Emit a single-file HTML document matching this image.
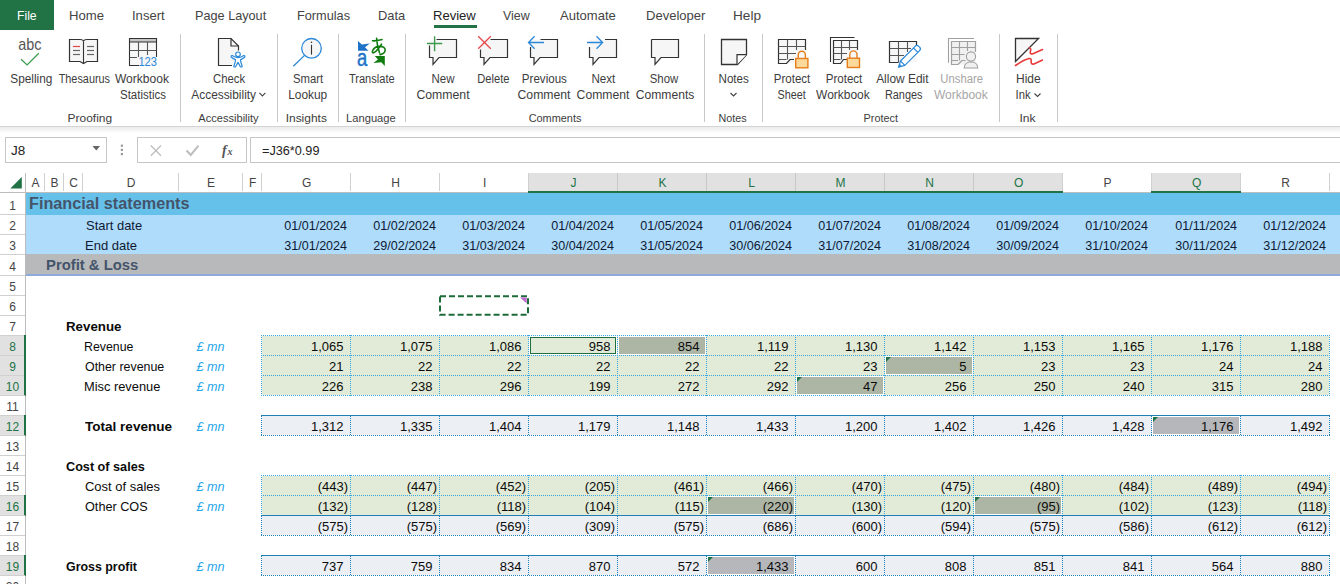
<!DOCTYPE html><html><head><meta charset="utf-8"><style>
html,body{margin:0;padding:0;}
body{width:1340px;height:584px;overflow:hidden;position:relative;background:#fff;font-family:"Liberation Sans", sans-serif;}
.t{position:absolute;white-space:nowrap;}
.r{position:absolute;box-sizing:border-box;}
.sc{display:inline-block;}
svg{position:absolute;left:0;top:0;}
</style></head><body>
<div class="r" style="left:0px;top:0px;width:54px;height:30px;background:#217346;"></div>
<div class="t" style="left:16.56px;top:9.00px;font-size:13px;line-height:13px;color:#fff;font-weight:normal;font-style:normal;text-align:left;"><span class="sc" style="transform:scaleX(0.9383);transform-origin:left center">File</span></div>
<div class="t" style="left:68.59px;top:9.00px;font-size:13px;line-height:13px;color:#444;font-weight:normal;font-style:normal;text-align:left;"><span class="sc" style="transform:scaleX(1.0105);transform-origin:left center">Home</span></div>
<div class="t" style="left:132.00px;top:9.00px;font-size:13px;line-height:13px;color:#444;font-weight:normal;font-style:normal;text-align:left;"><span class="sc" style="transform:scaleX(1.0031);transform-origin:left center">Insert</span></div>
<div class="t" style="left:195.42px;top:9.00px;font-size:13px;line-height:13px;color:#444;font-weight:normal;font-style:normal;text-align:left;"><span class="sc" style="transform:scaleX(0.9752);transform-origin:left center">Page Layout</span></div>
<div class="t" style="left:296.52px;top:9.00px;font-size:13px;line-height:13px;color:#444;font-weight:normal;font-style:normal;text-align:left;"><span class="sc" style="transform:scaleX(0.9781);transform-origin:left center">Formulas</span></div>
<div class="t" style="left:378.01px;top:9.00px;font-size:13px;line-height:13px;color:#444;font-weight:normal;font-style:normal;text-align:left;"><span class="sc" style="transform:scaleX(0.9916);transform-origin:left center">Data</span></div>
<div class="t" style="left:433.00px;top:9.00px;font-size:13px;line-height:13px;color:#222;font-weight:normal;font-style:normal;text-align:left;"><span class="sc" style="transform:scaleX(1.0039);transform-origin:left center">Review</span></div>
<div class="t" style="left:502.70px;top:9.00px;font-size:13px;line-height:13px;color:#444;font-weight:normal;font-style:normal;text-align:left;"><span class="sc" style="transform:scaleX(0.9561);transform-origin:left center">View</span></div>
<div class="t" style="left:560.00px;top:9.00px;font-size:13px;line-height:13px;color:#444;font-weight:normal;font-style:normal;text-align:left;"><span class="sc" style="transform:scaleX(1.0034);transform-origin:left center">Automate</span></div>
<div class="t" style="left:645.50px;top:9.00px;font-size:13px;line-height:13px;color:#444;font-weight:normal;font-style:normal;text-align:left;"><span class="sc" style="transform:scaleX(1.0029);transform-origin:left center">Developer</span></div>
<div class="t" style="left:732.95px;top:9.00px;font-size:13px;line-height:13px;color:#444;font-weight:normal;font-style:normal;text-align:left;"><span class="sc" style="transform:scaleX(1.0468);transform-origin:left center">Help</span></div>
<div class="r" style="left:434px;top:25px;width:43px;height:3px;background:#217346;"></div>
<div class="t" style="left:-268.97px;width:600px;top:72.84px;font-size:12px;line-height:12px;color:#3c3c3c;font-weight:normal;font-style:normal;text-align:center;"><span class="sc" style="transform:scaleX(0.9852);transform-origin:center center">Spelling</span></div>
<div class="t" style="left:-216.10px;width:600px;top:72.84px;font-size:12px;line-height:12px;color:#3c3c3c;font-weight:normal;font-style:normal;text-align:center;"><span class="sc" style="transform:scaleX(0.9066);transform-origin:center center">Thesaurus</span></div>
<div class="t" style="left:-158.00px;width:600px;top:72.84px;font-size:12px;line-height:12px;color:#3c3c3c;font-weight:normal;font-style:normal;text-align:center;"><span class="sc" style="transform:scaleX(1.0036);transform-origin:center center">Workbook</span></div>
<div class="t" style="left:-157.00px;width:600px;top:88.84px;font-size:12px;line-height:12px;color:#3c3c3c;font-weight:normal;font-style:normal;text-align:center;"><span class="sc" style="transform:scaleX(0.9581);transform-origin:center center">Statistics</span></div>
<div class="t" style="left:-210.38px;width:600px;top:112.52px;font-size:11.2px;line-height:11.2px;color:#3c3c3c;font-weight:normal;font-style:normal;text-align:center;"><span class="sc" style="transform:scaleX(1.0688);transform-origin:center center">Proofing</span></div>
<div class="t" style="left:-70.97px;width:600px;top:72.84px;font-size:12px;line-height:12px;color:#3c3c3c;font-weight:normal;font-style:normal;text-align:center;"><span class="sc" style="transform:scaleX(0.9425);transform-origin:center center">Check</span></div>
<div class="t" style="left:-76.60px;width:600px;top:88.84px;font-size:12px;line-height:12px;color:#3c3c3c;font-weight:normal;font-style:normal;text-align:center;"><span class="sc" style="transform:scaleX(0.9901);transform-origin:center center">Accessibility</span></div>
<div class="t" style="left:-71.80px;width:600px;top:112.52px;font-size:11.2px;line-height:11.2px;color:#3c3c3c;font-weight:normal;font-style:normal;text-align:center;"><span class="sc" style="transform:scaleX(0.9913);transform-origin:center center">Accessibility</span></div>
<div class="t" style="left:7.99px;width:600px;top:72.84px;font-size:12px;line-height:12px;color:#3c3c3c;font-weight:normal;font-style:normal;text-align:center;"><span class="sc" style="transform:scaleX(0.9428);transform-origin:center center">Smart</span></div>
<div class="t" style="left:8.14px;width:600px;top:88.84px;font-size:12px;line-height:12px;color:#3c3c3c;font-weight:normal;font-style:normal;text-align:center;"><span class="sc" style="transform:scaleX(0.9926);transform-origin:center center">Lookup</span></div>
<div class="t" style="left:6.55px;width:600px;top:112.52px;font-size:11.2px;line-height:11.2px;color:#3c3c3c;font-weight:normal;font-style:normal;text-align:center;"><span class="sc" style="transform:scaleX(1.0695);transform-origin:center center">Insights</span></div>
<div class="t" style="left:71.85px;width:600px;top:72.84px;font-size:12px;line-height:12px;color:#3c3c3c;font-weight:normal;font-style:normal;text-align:center;"><span class="sc" style="transform:scaleX(0.9218);transform-origin:center center">Translate</span></div>
<div class="t" style="left:71.31px;width:600px;top:112.52px;font-size:11.2px;line-height:11.2px;color:#3c3c3c;font-weight:normal;font-style:normal;text-align:center;"><span class="sc" style="transform:scaleX(0.9989);transform-origin:center center">Language</span></div>
<div class="t" style="left:143.24px;width:600px;top:72.84px;font-size:12px;line-height:12px;color:#3c3c3c;font-weight:normal;font-style:normal;text-align:center;"><span class="sc" style="transform:scaleX(0.9573);transform-origin:center center">New</span></div>
<div class="t" style="left:142.96px;width:600px;top:88.84px;font-size:12px;line-height:12px;color:#3c3c3c;font-weight:normal;font-style:normal;text-align:center;"><span class="sc" style="transform:scaleX(1.0213);transform-origin:center center">Comment</span></div>
<div class="t" style="left:193.55px;width:600px;top:72.84px;font-size:12px;line-height:12px;color:#3c3c3c;font-weight:normal;font-style:normal;text-align:center;"><span class="sc" style="transform:scaleX(0.9311);transform-origin:center center">Delete</span></div>
<div class="t" style="left:244.50px;width:600px;top:72.84px;font-size:12px;line-height:12px;color:#3c3c3c;font-weight:normal;font-style:normal;text-align:center;"><span class="sc" style="transform:scaleX(0.9639);transform-origin:center center">Previous</span></div>
<div class="t" style="left:243.56px;width:600px;top:88.84px;font-size:12px;line-height:12px;color:#3c3c3c;font-weight:normal;font-style:normal;text-align:center;"><span class="sc" style="transform:scaleX(1.0194);transform-origin:center center">Comment</span></div>
<div class="t" style="left:302.98px;width:600px;top:72.84px;font-size:12px;line-height:12px;color:#3c3c3c;font-weight:normal;font-style:normal;text-align:center;"><span class="sc" style="transform:scaleX(0.9669);transform-origin:center center">Next</span></div>
<div class="t" style="left:302.96px;width:600px;top:88.84px;font-size:12px;line-height:12px;color:#3c3c3c;font-weight:normal;font-style:normal;text-align:center;"><span class="sc" style="transform:scaleX(1.0156);transform-origin:center center">Comment</span></div>
<div class="t" style="left:364.24px;width:600px;top:72.84px;font-size:12px;line-height:12px;color:#3c3c3c;font-weight:normal;font-style:normal;text-align:center;"><span class="sc" style="transform:scaleX(0.9489);transform-origin:center center">Show</span></div>
<div class="t" style="left:364.70px;width:600px;top:88.84px;font-size:12px;line-height:12px;color:#3c3c3c;font-weight:normal;font-style:normal;text-align:center;"><span class="sc" style="transform:scaleX(1.0118);transform-origin:center center">Comments</span></div>
<div class="t" style="left:255.00px;width:600px;top:112.52px;font-size:11.2px;line-height:11.2px;color:#3c3c3c;font-weight:normal;font-style:normal;text-align:center;"><span class="sc" style="transform:scaleX(0.9763);transform-origin:center center">Comments</span></div>
<div class="t" style="left:433.80px;width:600px;top:72.84px;font-size:12px;line-height:12px;color:#3c3c3c;font-weight:normal;font-style:normal;text-align:center;"><span class="sc" style="transform:scaleX(0.9698);transform-origin:center center">Notes</span></div>
<div class="t" style="left:432.61px;width:600px;top:112.52px;font-size:11.2px;line-height:11.2px;color:#3c3c3c;font-weight:normal;font-style:normal;text-align:center;"><span class="sc" style="transform:scaleX(0.9584);transform-origin:center center">Notes</span></div>
<div class="t" style="left:491.68px;width:600px;top:72.84px;font-size:12px;line-height:12px;color:#3c3c3c;font-weight:normal;font-style:normal;text-align:center;"><span class="sc" style="transform:scaleX(0.9591);transform-origin:center center">Protect</span></div>
<div class="t" style="left:492.10px;width:600px;top:88.84px;font-size:12px;line-height:12px;color:#3c3c3c;font-weight:normal;font-style:normal;text-align:center;"><span class="sc" style="transform:scaleX(0.8993);transform-origin:center center">Sheet</span></div>
<div class="t" style="left:543.98px;width:600px;top:72.84px;font-size:12px;line-height:12px;color:#3c3c3c;font-weight:normal;font-style:normal;text-align:center;"><span class="sc" style="transform:scaleX(0.9643);transform-origin:center center">Protect</span></div>
<div class="t" style="left:542.90px;width:600px;top:88.84px;font-size:12px;line-height:12px;color:#3c3c3c;font-weight:normal;font-style:normal;text-align:center;"><span class="sc" style="transform:scaleX(0.9982);transform-origin:center center">Workbook</span></div>
<div class="t" style="left:602.17px;width:600px;top:72.84px;font-size:12px;line-height:12px;color:#3c3c3c;font-weight:normal;font-style:normal;text-align:center;"><span class="sc" style="transform:scaleX(0.9934);transform-origin:center center">Allow Edit</span></div>
<div class="t" style="left:603.20px;width:600px;top:88.84px;font-size:12px;line-height:12px;color:#3c3c3c;font-weight:normal;font-style:normal;text-align:center;"><span class="sc" style="transform:scaleX(0.9091);transform-origin:center center">Ranges</span></div>
<div class="t" style="left:661.35px;width:600px;top:72.84px;font-size:12px;line-height:12px;color:#a6a6a6;font-weight:normal;font-style:normal;text-align:center;"><span class="sc" style="transform:scaleX(0.9413);transform-origin:center center">Unshare</span></div>
<div class="t" style="left:660.90px;width:600px;top:88.84px;font-size:12px;line-height:12px;color:#a6a6a6;font-weight:normal;font-style:normal;text-align:center;"><span class="sc" style="transform:scaleX(1.0000);transform-origin:center center">Workbook</span></div>
<div class="t" style="left:580.67px;width:600px;top:112.52px;font-size:11.2px;line-height:11.2px;color:#3c3c3c;font-weight:normal;font-style:normal;text-align:center;"><span class="sc" style="transform:scaleX(0.9688);transform-origin:center center">Protect</span></div>
<div class="t" style="left:728.34px;width:600px;top:72.84px;font-size:12px;line-height:12px;color:#3c3c3c;font-weight:normal;font-style:normal;text-align:center;"><span class="sc" style="transform:scaleX(0.9998);transform-origin:center center">Hide</span></div>
<div class="t" style="left:722.56px;width:600px;top:88.84px;font-size:12px;line-height:12px;color:#3c3c3c;font-weight:normal;font-style:normal;text-align:center;"><span class="sc" style="transform:scaleX(0.9370);transform-origin:center center">Ink</span></div>
<div class="t" style="left:727.54px;width:600px;top:112.52px;font-size:11.2px;line-height:11.2px;color:#3c3c3c;font-weight:normal;font-style:normal;text-align:center;"><span class="sc" style="transform:scaleX(1.0747);transform-origin:center center">Ink</span></div>
<svg width="1340" height="130" viewBox="0 0 1340 130"><line x1="180.5" y1="34" x2="180.5" y2="122" stroke="#c8c8c8" stroke-width="1"/><line x1="277.5" y1="34" x2="277.5" y2="122" stroke="#c8c8c8" stroke-width="1"/><line x1="338.5" y1="34" x2="338.5" y2="122" stroke="#c8c8c8" stroke-width="1"/><line x1="405.5" y1="34" x2="405.5" y2="122" stroke="#c8c8c8" stroke-width="1"/><line x1="704.5" y1="34" x2="704.5" y2="122" stroke="#c8c8c8" stroke-width="1"/><line x1="762.5" y1="34" x2="762.5" y2="122" stroke="#c8c8c8" stroke-width="1"/><line x1="999.5" y1="34" x2="999.5" y2="122" stroke="#c8c8c8" stroke-width="1"/><line x1="1057.5" y1="34" x2="1057.5" y2="122" stroke="#c8c8c8" stroke-width="1"/><path d="M259.4,92.9 L262.4,95.9 L265.4,92.9" fill="none" stroke="#444" stroke-width="1.1"/><path d="M730.5,93.0 L733.5,96.0 L736.5,93.0" fill="none" stroke="#444" stroke-width="1.1"/><path d="M1034.5,93.5 L1037.5,96.5 L1040.5,93.5" fill="none" stroke="#444" stroke-width="1.1"/><text x="18.3" y="50" font-size="16" fill="#555" font-family="Liberation Sans" transform="translate(18.3,0) scale(0.9,1) translate(-18.3,0)">abc</text><path d="M21,59.2 L27.1,64.9 L38.8,53.3" fill="none" stroke="#3c9a4e" stroke-width="1.3"/><path d="M69.5,39.5 L80,39.5 Q83.5,39.5 83.5,41.5 Q83.5,39.5 87,39.5 L97.5,39.5 L97.5,61.5 L87,61.5 L83.5,63.5 L80,61.5 L69.5,61.5 Z" fill="#f6f6f6" stroke="#333" stroke-width="1.2"/><line x1="83.5" y1="41.5" x2="83.5" y2="63" stroke="#333" stroke-width="1.1"/><line x1="73" y1="46.5" x2="80" y2="46.5" stroke="#e8474a" stroke-width="1.2"/><line x1="73" y1="50.5" x2="80" y2="50.5" stroke="#666" stroke-width="1.2"/><line x1="73" y1="54.5" x2="80" y2="54.5" stroke="#666" stroke-width="1.2"/><line x1="87" y1="46.5" x2="94" y2="46.5" stroke="#666" stroke-width="1.2"/><line x1="87" y1="50.5" x2="94" y2="50.5" stroke="#666" stroke-width="1.2"/><line x1="87" y1="54.5" x2="94" y2="54.5" stroke="#666" stroke-width="1.2"/><rect x="129.5" y="38.5" width="27" height="27" fill="#f7f7f7" stroke="none"/><rect x="129.5" y="38.5" width="27" height="3.5" fill="#c6c6c6" stroke="#333" stroke-width="1"/><path d="M156.5,57 L156.5,38.5 L129.5,38.5 L129.5,65.5 L139,65.5" fill="none" stroke="#333" stroke-width="1.1"/><path d="M129.5,50.5 L156.5,50.5 M129.5,57.5 L137,57.5 M138.5,42 L138.5,57 M147.5,42 L147.5,55" fill="none" stroke="#555" stroke-width="1.1"/><text x="138.4" y="66" font-size="13" fill="#2b88d8" font-family="Liberation Sans" transform="translate(138.4,0) scale(0.86,1) translate(-138.4,0)">123</text><path d="M218.5,38.5 L231,38.5 L238.5,46 L238.5,52 L232,65.5 L218.5,65.5 Z" fill="#f6f6f6" stroke="none"/><path d="M238.5,50.5 L238.5,46 L231,38.5 L218.5,38.5 L218.5,65.5 L232,65.5" fill="none" stroke="#333" stroke-width="1.2"/><path d="M231,38.5 L231,46 L238.5,46" fill="none" stroke="#333" stroke-width="1.2"/><circle cx="238" cy="54.3" r="2.3" fill="#fff" stroke="#2b88d8" stroke-width="1.2"/><path d="M232.2,55.6 Q235,57.6 238,57.6 Q241,57.6 243.8,55.6 Q245.2,55.2 244.8,57 Q242.6,59 240.6,59.6 L240.8,62 L242.2,66.2 Q241.8,67.4 240.4,66.8 L238,62.4 L235.6,66.8 Q234.2,67.4 233.8,66.2 L235.2,62 L235.4,59.6 Q233.4,59 231.2,57 Q230.8,55.2 232.2,55.6 Z" fill="#fff" stroke="#2b88d8" stroke-width="1.2" stroke-linejoin="round"/><circle cx="311.5" cy="48.3" r="9.8" fill="#f6f6f6" stroke="#2b88d8" stroke-width="1.3"/><line x1="293.3" y1="66.3" x2="304.5" y2="55.4" stroke="#2b88d8" stroke-width="1.3"/><circle cx="311.5" cy="42.3" r="0.8" fill="#333"/><line x1="311.5" y1="44.8" x2="311.5" y2="54.6" stroke="#333" stroke-width="1.1"/><path d="M358,41 L361.8,44.6 L369.8,43.6 L365,47.2 L368.4,50.8 L358,50.8 Z" fill="#1e73c8"/><text x="357" y="66" font-size="23" fill="#1e73c8" stroke="#1e73c8" stroke-width="0.5" font-family="Liberation Sans" transform="translate(357,0) scale(0.8,1) translate(-357,0)">a</text><path d="M372.5,40.8 Q377,41 382,39.6 M376.6,38.3 Q377,46 379.5,52.8 M381.5,44.2 Q377.5,50.5 374,52.6 Q371.8,53.6 372.6,50.6 Q374.5,46.6 379.5,46.4 Q385.3,46.3 385.2,50.2 Q385,53.6 380,54.6" fill="none" stroke="#107c10" stroke-width="1.6" stroke-linecap="round"/><path d="M384.8,65.9 L381.3,62.3 L373.4,63.1 L377.9,59.6 L374.8,55.9 L384.8,55.9 Z" fill="#107c10"/><path d="M429.5,39.5 L456.5,39.5 L456.5,57.5 L439,57.5 L433,64.3 L433,57.5 L429.5,57.5 Z" fill="#f6f6f6"/><path d="M436.5,39.5 L456.5,39.5 L456.5,57.5 L439,57.5 L433,64.3 L433,57.5 L429.5,57.5 L429.5,45.5" fill="none" stroke="#333" stroke-width="1.2" stroke-linejoin="miter"/><path d="M427,43.5 L442.2,43.5 M434.6,36.3 L434.6,51.3" stroke="#3c9a4e" stroke-width="1.4"/><path d="M480.5,39.5 L507.5,39.5 L507.5,57.5 L490,57.5 L484,64.3 L484,57.5 L480.5,57.5 Z" fill="#f6f6f6"/><path d="M490.5,39.5 L507.5,39.5 L507.5,57.5 L490,57.5 L484,64.3 L484,57.5 L480.5,57.5 L480.5,49.5" fill="none" stroke="#333" stroke-width="1.2" stroke-linejoin="miter"/><path d="M478.2,36.2 L490.8,48.7 M490.8,36.2 L478.2,48.7" stroke="#e8474a" stroke-width="1.3"/><path d="M530.5,39.5 L557.5,39.5 L557.5,57.5 L540,57.5 L534,64.3 L534,57.5 L530.5,57.5 Z" fill="#f6f6f6"/><path d="M540.5,39.5 L557.5,39.5 L557.5,57.5 L540,57.5 L534,64.3 L534,57.5 L530.5,57.5 L530.5,47" fill="none" stroke="#333" stroke-width="1.2" stroke-linejoin="miter"/><path d="M528.5,42.5 L544,42.5 M534.6,36.3 L528.5,42.5 L534.6,48.7" fill="none" stroke="#2b88d8" stroke-width="1.3"/><path d="M589.5,39.5 L616.5,39.5 L616.5,57.5 L599,57.5 L593,64.3 L593,57.5 L589.5,57.5 Z" fill="#f6f6f6"/><path d="M605,39.5 L616.5,39.5 L616.5,57.5 L599,57.5 L593,64.3 L593,57.5 L589.5,57.5 L589.5,47" fill="none" stroke="#333" stroke-width="1.2" stroke-linejoin="miter"/><path d="M587,42.5 L602.6,42.5 M596.5,36.3 L602.6,42.5 L596.5,48.7" fill="none" stroke="#2b88d8" stroke-width="1.3"/><path d="M651.5,39.5 L678.5,39.5 L678.5,57.5 L661,57.5 L655,64.3 L655,57.5 L651.5,57.5 Z" fill="#f6f6f6"/><path d="M651.5,39.5 L678.5,39.5 L678.5,57.5 L661,57.5 L655,64.3 L655,57.5 L651.5,57.5 L651.5,39.5" fill="none" stroke="#333" stroke-width="1.2" stroke-linejoin="miter"/><path d="M721.5,39.5 L746.5,39.5 L746.5,54.7 L737.5,64.5 L721.5,64.5 Z" fill="#f6f6f6" stroke="#333" stroke-width="1.3" stroke-linejoin="miter"/><path d="M746.5,54.7 L737,54.7 L737,64.5" fill="#fff" stroke="#333" stroke-width="1.2"/><rect x="778.5" y="39.5" width="27" height="24" fill="#f7f7f7"/><path d="M805.5,50 L805.5,39.5 L778.5,39.5 L778.5,63.5 L786.5,63.5 L790,59.5 L794,59.5" fill="none" stroke="#333" stroke-width="1.2"/><path d="M778.5,46.5 L805.5,46.5 M778.5,53.5 L796,53.5 M778.5,59.5 L786.5,59.5 M787.5,39.5 L787.5,59.5 M796.5,39.5 L796.5,50" fill="none" stroke="#555" stroke-width="1.1"/><path d="M798.2,58.5 L798.2,55.0 A3.6,3.8 0 0 1 805.4000000000001,55.0 L805.4000000000001,58.5" fill="none" stroke="#e67e1c" stroke-width="1.4"/><rect x="795.7" y="58.5" width="12.2" height="9.3" fill="#fad99b" stroke="#e67e1c" stroke-width="1.4"/><path d="M830.5,62 L830.5,37.5 L854.5,37.5" fill="none" stroke="#333" stroke-width="1.1"/><rect x="833.5" y="40.5" width="24.5" height="23" fill="#f7f7f7"/><path d="M857.5,50 L857.5,40.5 L833.5,40.5 L833.5,63.5 L840.5,63.5 L843.5,59.5 L847,59.5" fill="none" stroke="#333" stroke-width="1.2"/><path d="M833.5,47.5 L857.5,47.5 M833.5,53.5 L847,53.5 M833.5,59.5 L840.5,59.5 M841.5,40.5 L841.5,59.5 M849.5,40.5 L849.5,50" fill="none" stroke="#555" stroke-width="1.1"/><path d="M849.8,58.2 L849.8,54.7 A3.6,3.8 0 0 1 857.0,54.7 L857.0,58.2" fill="none" stroke="#e67e1c" stroke-width="1.4"/><rect x="847.3" y="58.2" width="12.2" height="9.3" fill="#fad99b" stroke="#e67e1c" stroke-width="1.4"/><rect x="889.5" y="41.5" width="27" height="21" fill="#f7f7f7"/><path d="M916.5,45 L916.5,41.5 L889.5,41.5 L889.5,62.5 L898.5,62.5" fill="none" stroke="#333" stroke-width="1.2"/><path d="M889.5,48.5 L911,48.5 M889.5,55.5 L904,55.5 M898.5,41.5 L898.5,62.5 M907.5,41.5 L907.5,52" fill="none" stroke="#555" stroke-width="1.1"/><path d="M898.5,67.3 L900.5,61 L915.2,46.3 Q917,44.6 918.7,46.3 L919.6,47.2 Q921.3,49 919.6,50.7 L904.8,65.4 Z" fill="#fff" stroke="#2b88d8" stroke-width="1.2" stroke-linejoin="round"/><path d="M900.5,61 L904.8,65.4 M913.5,48 L917.9,52.4" fill="none" stroke="#2b88d8" stroke-width="1.1"/><path d="M898.5,67.3 L899.6,63.8 L902,66.2 Z" fill="#2b88d8"/><path d="M948.5,62.7 L948.5,38.5 L974,38.5" fill="none" stroke="#a0a0a0" stroke-width="1.1"/><rect x="951.5" y="41.5" width="24" height="23" fill="#f0f0f0"/><path d="M975.5,52 L975.5,41.5 L951.5,41.5 L951.5,64.5 L958,64.5 L962,60.5 L965.5,60.5" fill="none" stroke="#a0a0a0" stroke-width="1.2"/><path d="M951.5,47.5 L975.5,47.5 M951.5,54.5 L964.5,54.5 M951.5,60.5 L958,60.5 M959.5,41.5 L959.5,60.5 M967.5,41.5 L967.5,51" fill="none" stroke="#a0a0a0" stroke-width="1.1"/><circle cx="971" cy="56.5" r="4.6" fill="#f0f0f0" stroke="#a0a0a0" stroke-width="1.1"/><path d="M964.2,68 Q964.5,62 971,62 Q977.5,62 977.8,68 Z" fill="#f0f0f0" stroke="#a0a0a0" stroke-width="1.1"/><path d="M1015.5,38.5 L1038.6,38.5 L1015.5,61.5 Z" fill="#f6f6f6" stroke="#333" stroke-width="1.3" stroke-linejoin="miter"/><path d="M1029.3,47.9 Q1031.5,48.5 1030.5,51 Q1029.2,54.5 1033,53.7 L1042.5,49.5" fill="none" stroke="#e83a3a" stroke-width="1.6" stroke-linecap="round"/><path d="M1015.5,65.5 Q1023,60 1029,58.5 Q1031.5,58.3 1031.2,61 Q1030.7,64.8 1034,64 L1042.5,60" fill="none" stroke="#e83a3a" stroke-width="1.6" stroke-linecap="round"/></svg>
<div class="r" style="left:0px;top:126px;width:1340px;height:1px;background:#d4d4d4;"></div>
<div class="r" style="left:0px;top:127px;width:1340px;height:6px;background:linear-gradient(#ececec,#fdfdfd);"></div>
<div class="r" style="left:5px;top:137px;width:102px;height:26px;background:#fff;border:1px solid #c6c6c6;"></div>
<div class="t" style="left:11.00px;top:144.20px;font-size:13px;line-height:13px;color:#222;font-weight:normal;font-style:normal;text-align:left;"><span class="sc" style="transform:scaleX(1.0370);transform-origin:left center">J8</span></div>
<svg width="1340" height="170" viewBox="0 0 1340 170" style="pointer-events:none"><path d="M92.5,146 L100,146 L96.3,150.5 Z" fill="#666"/><rect x="120.8" y="144.6" width="2.2" height="2.2" fill="#999"/><rect x="120.8" y="148.8" width="2.2" height="2.2" fill="#999"/><rect x="120.8" y="153" width="2.2" height="2.2" fill="#999"/></svg>
<div class="r" style="left:137px;top:137px;width:110px;height:26px;background:#fff;border:1px solid #c6c6c6;"></div>
<div class="r" style="left:250px;top:137px;width:1100px;height:26px;background:#fff;border:1px solid #c6c6c6;"></div>
<svg width="1340" height="170" viewBox="0 0 1340 170" style="pointer-events:none"><path d="M150.8,145.5 L161,155.7 M161,145.5 L150.8,155.7" stroke="#bdbdbd" stroke-width="1.3"/><path d="M186.5,150.5 L190.8,155 L198.5,145.7" fill="none" stroke="#bdbdbd" stroke-width="2"/><text x="222" y="155" font-size="14" font-style="italic" font-weight="bold" fill="#555" font-family="Liberation Serif">f</text><text x="227.5" y="155" font-size="10" font-style="italic" font-weight="bold" fill="#555" font-family="Liberation Serif">x</text></svg>
<div class="t" style="left:262.40px;top:144.20px;font-size:13px;line-height:13px;color:#222;font-weight:normal;font-style:normal;text-align:left;"><span class="sc" style="transform:scaleX(0.9747);transform-origin:left center">=J36*0.99</span></div>
<div class="t" style="left:-264.40px;width:600px;top:176.84px;font-size:12px;line-height:12px;color:#444;font-weight:normal;font-style:normal;text-align:center;">A</div>
<div class="t" style="left:-245.40px;width:600px;top:176.84px;font-size:12px;line-height:12px;color:#444;font-weight:normal;font-style:normal;text-align:center;">B</div>
<div class="t" style="left:-226.40px;width:600px;top:176.84px;font-size:12px;line-height:12px;color:#444;font-weight:normal;font-style:normal;text-align:center;">C</div>
<div class="t" style="left:-168.90px;width:600px;top:176.84px;font-size:12px;line-height:12px;color:#444;font-weight:normal;font-style:normal;text-align:center;">D</div>
<div class="t" style="left:-88.90px;width:600px;top:176.84px;font-size:12px;line-height:12px;color:#444;font-weight:normal;font-style:normal;text-align:center;">E</div>
<div class="t" style="left:-47.40px;width:600px;top:176.84px;font-size:12px;line-height:12px;color:#444;font-weight:normal;font-style:normal;text-align:center;">F</div>
<div class="t" style="left:6.60px;width:600px;top:176.84px;font-size:12px;line-height:12px;color:#444;font-weight:normal;font-style:normal;text-align:center;">G</div>
<div class="t" style="left:95.60px;width:600px;top:176.84px;font-size:12px;line-height:12px;color:#444;font-weight:normal;font-style:normal;text-align:center;">H</div>
<div class="t" style="left:184.60px;width:600px;top:176.84px;font-size:12px;line-height:12px;color:#444;font-weight:normal;font-style:normal;text-align:center;">I</div>
<div class="r" style="left:528px;top:173px;width:89px;height:18px;background:#e1e1e1;"></div>
<div class="r" style="left:528px;top:191px;width:89px;height:2px;background:#217346;"></div>
<div class="t" style="left:273.60px;width:600px;top:176.84px;font-size:12px;line-height:12px;color:#217346;font-weight:normal;font-style:normal;text-align:center;">J</div>
<div class="r" style="left:617px;top:173px;width:89px;height:18px;background:#e1e1e1;"></div>
<div class="r" style="left:617px;top:191px;width:89px;height:2px;background:#217346;"></div>
<div class="t" style="left:362.60px;width:600px;top:176.84px;font-size:12px;line-height:12px;color:#217346;font-weight:normal;font-style:normal;text-align:center;">K</div>
<div class="r" style="left:706px;top:173px;width:89px;height:18px;background:#e1e1e1;"></div>
<div class="r" style="left:706px;top:191px;width:89px;height:2px;background:#217346;"></div>
<div class="t" style="left:451.60px;width:600px;top:176.84px;font-size:12px;line-height:12px;color:#217346;font-weight:normal;font-style:normal;text-align:center;">L</div>
<div class="r" style="left:795px;top:173px;width:89px;height:18px;background:#e1e1e1;"></div>
<div class="r" style="left:795px;top:191px;width:89px;height:2px;background:#217346;"></div>
<div class="t" style="left:540.60px;width:600px;top:176.84px;font-size:12px;line-height:12px;color:#217346;font-weight:normal;font-style:normal;text-align:center;">M</div>
<div class="r" style="left:884px;top:173px;width:89px;height:18px;background:#e1e1e1;"></div>
<div class="r" style="left:884px;top:191px;width:89px;height:2px;background:#217346;"></div>
<div class="t" style="left:629.60px;width:600px;top:176.84px;font-size:12px;line-height:12px;color:#217346;font-weight:normal;font-style:normal;text-align:center;">N</div>
<div class="r" style="left:973px;top:173px;width:89px;height:18px;background:#e1e1e1;"></div>
<div class="r" style="left:973px;top:191px;width:89px;height:2px;background:#217346;"></div>
<div class="t" style="left:718.60px;width:600px;top:176.84px;font-size:12px;line-height:12px;color:#217346;font-weight:normal;font-style:normal;text-align:center;">O</div>
<div class="t" style="left:807.60px;width:600px;top:176.84px;font-size:12px;line-height:12px;color:#444;font-weight:normal;font-style:normal;text-align:center;">P</div>
<div class="r" style="left:1151px;top:173px;width:89px;height:18px;background:#e1e1e1;"></div>
<div class="r" style="left:1151px;top:191px;width:89px;height:2px;background:#217346;"></div>
<div class="t" style="left:896.60px;width:600px;top:176.84px;font-size:12px;line-height:12px;color:#217346;font-weight:normal;font-style:normal;text-align:center;">Q</div>
<div class="t" style="left:985.60px;width:600px;top:176.84px;font-size:12px;line-height:12px;color:#444;font-weight:normal;font-style:normal;text-align:center;">R</div>
<div class="t" style="left:1074.60px;width:600px;top:176.84px;font-size:12px;line-height:12px;color:#444;font-weight:normal;font-style:normal;text-align:center;">S</div>
<div class="r" style="left:44px;top:173px;width:1px;height:18px;background:#d0d0d0;"></div>
<div class="r" style="left:63px;top:173px;width:1px;height:18px;background:#d0d0d0;"></div>
<div class="r" style="left:82px;top:173px;width:1px;height:18px;background:#d0d0d0;"></div>
<div class="r" style="left:178px;top:173px;width:1px;height:18px;background:#d0d0d0;"></div>
<div class="r" style="left:242px;top:173px;width:1px;height:18px;background:#d0d0d0;"></div>
<div class="r" style="left:261px;top:173px;width:1px;height:18px;background:#d0d0d0;"></div>
<div class="r" style="left:350px;top:173px;width:1px;height:18px;background:#d0d0d0;"></div>
<div class="r" style="left:439px;top:173px;width:1px;height:18px;background:#d0d0d0;"></div>
<div class="r" style="left:528px;top:173px;width:1px;height:18px;background:#d0d0d0;"></div>
<div class="r" style="left:617px;top:173px;width:1px;height:18px;background:#c8c8c8;"></div>
<div class="r" style="left:706px;top:173px;width:1px;height:18px;background:#c8c8c8;"></div>
<div class="r" style="left:795px;top:173px;width:1px;height:18px;background:#c8c8c8;"></div>
<div class="r" style="left:884px;top:173px;width:1px;height:18px;background:#c8c8c8;"></div>
<div class="r" style="left:973px;top:173px;width:1px;height:18px;background:#c8c8c8;"></div>
<div class="r" style="left:1062px;top:173px;width:1px;height:18px;background:#d0d0d0;"></div>
<div class="r" style="left:1151px;top:173px;width:1px;height:18px;background:#d0d0d0;"></div>
<div class="r" style="left:1240px;top:173px;width:1px;height:18px;background:#d0d0d0;"></div>
<div class="r" style="left:1329px;top:173px;width:1px;height:18px;background:#d0d0d0;"></div>
<div class="r" style="left:0px;top:192px;width:1340px;height:1px;background:#bdbdbd;"></div>
<div class="r" style="left:528px;top:191px;width:90px;height:2px;background:#217346;"></div>
<div class="r" style="left:617px;top:191px;width:90px;height:2px;background:#217346;"></div>
<div class="r" style="left:706px;top:191px;width:90px;height:2px;background:#217346;"></div>
<div class="r" style="left:795px;top:191px;width:90px;height:2px;background:#217346;"></div>
<div class="r" style="left:884px;top:191px;width:90px;height:2px;background:#217346;"></div>
<div class="r" style="left:973px;top:191px;width:90px;height:2px;background:#217346;"></div>
<div class="r" style="left:1151px;top:191px;width:90px;height:2px;background:#217346;"></div>
<svg width="30" height="195" viewBox="0 0 30 195"><path d="M10.3,188.6 L21.8,188.6 L21.8,177 Z" fill="#217346"/></svg>
<div class="r" style="left:25px;top:173px;width:1px;height:411px;background:#bdbdbd;"></div>
<div class="r" style="left:0px;top:214px;width:25px;height:1px;background:#d0d0d0;"></div>
<div class="t" style="left:-287.50px;width:600px;top:199.64px;font-size:12px;line-height:12px;color:#444;font-weight:normal;font-style:normal;text-align:center;">1</div>
<div class="r" style="left:0px;top:234px;width:25px;height:1px;background:#d0d0d0;"></div>
<div class="t" style="left:-287.50px;width:600px;top:219.64px;font-size:12px;line-height:12px;color:#444;font-weight:normal;font-style:normal;text-align:center;">2</div>
<div class="r" style="left:0px;top:254px;width:25px;height:1px;background:#d0d0d0;"></div>
<div class="t" style="left:-287.50px;width:600px;top:239.64px;font-size:12px;line-height:12px;color:#444;font-weight:normal;font-style:normal;text-align:center;">3</div>
<div class="r" style="left:0px;top:275px;width:25px;height:1px;background:#d0d0d0;"></div>
<div class="t" style="left:-287.50px;width:600px;top:260.64px;font-size:12px;line-height:12px;color:#444;font-weight:normal;font-style:normal;text-align:center;">4</div>
<div class="r" style="left:0px;top:295px;width:25px;height:1px;background:#d0d0d0;"></div>
<div class="t" style="left:-287.50px;width:600px;top:280.64px;font-size:12px;line-height:12px;color:#444;font-weight:normal;font-style:normal;text-align:center;">5</div>
<div class="r" style="left:0px;top:315px;width:25px;height:1px;background:#d0d0d0;"></div>
<div class="t" style="left:-287.50px;width:600px;top:300.64px;font-size:12px;line-height:12px;color:#444;font-weight:normal;font-style:normal;text-align:center;">6</div>
<div class="r" style="left:0px;top:335px;width:25px;height:1px;background:#d0d0d0;"></div>
<div class="t" style="left:-287.50px;width:600px;top:320.64px;font-size:12px;line-height:12px;color:#444;font-weight:normal;font-style:normal;text-align:center;">7</div>
<div class="r" style="left:0px;top:336px;width:24px;height:19px;background:#e1e1e1;"></div>
<div class="r" style="left:24px;top:335px;width:2px;height:21px;background:#217346;"></div>
<div class="r" style="left:0px;top:355px;width:25px;height:1px;background:#d0d0d0;"></div>
<div class="t" style="left:-287.50px;width:600px;top:340.64px;font-size:12px;line-height:12px;color:#217346;font-weight:normal;font-style:normal;text-align:center;">8</div>
<div class="r" style="left:0px;top:356px;width:24px;height:19px;background:#e1e1e1;"></div>
<div class="r" style="left:24px;top:355px;width:2px;height:21px;background:#217346;"></div>
<div class="r" style="left:0px;top:375px;width:25px;height:1px;background:#d0d0d0;"></div>
<div class="t" style="left:-287.50px;width:600px;top:360.64px;font-size:12px;line-height:12px;color:#217346;font-weight:normal;font-style:normal;text-align:center;">9</div>
<div class="r" style="left:0px;top:376px;width:24px;height:19px;background:#e1e1e1;"></div>
<div class="r" style="left:24px;top:375px;width:2px;height:21px;background:#217346;"></div>
<div class="r" style="left:0px;top:395px;width:25px;height:1px;background:#d0d0d0;"></div>
<div class="t" style="left:-287.50px;width:600px;top:380.64px;font-size:12px;line-height:12px;color:#217346;font-weight:normal;font-style:normal;text-align:center;">10</div>
<div class="r" style="left:0px;top:415px;width:25px;height:1px;background:#d0d0d0;"></div>
<div class="t" style="left:-287.50px;width:600px;top:400.64px;font-size:12px;line-height:12px;color:#444;font-weight:normal;font-style:normal;text-align:center;">11</div>
<div class="r" style="left:0px;top:416px;width:24px;height:19px;background:#e1e1e1;"></div>
<div class="r" style="left:24px;top:415px;width:2px;height:21px;background:#217346;"></div>
<div class="r" style="left:0px;top:435px;width:25px;height:1px;background:#d0d0d0;"></div>
<div class="t" style="left:-287.50px;width:600px;top:420.64px;font-size:12px;line-height:12px;color:#217346;font-weight:normal;font-style:normal;text-align:center;">12</div>
<div class="r" style="left:0px;top:455px;width:25px;height:1px;background:#d0d0d0;"></div>
<div class="t" style="left:-287.50px;width:600px;top:440.64px;font-size:12px;line-height:12px;color:#444;font-weight:normal;font-style:normal;text-align:center;">13</div>
<div class="r" style="left:0px;top:475px;width:25px;height:1px;background:#d0d0d0;"></div>
<div class="t" style="left:-287.50px;width:600px;top:460.64px;font-size:12px;line-height:12px;color:#444;font-weight:normal;font-style:normal;text-align:center;">14</div>
<div class="r" style="left:0px;top:495px;width:25px;height:1px;background:#d0d0d0;"></div>
<div class="t" style="left:-287.50px;width:600px;top:480.64px;font-size:12px;line-height:12px;color:#444;font-weight:normal;font-style:normal;text-align:center;">15</div>
<div class="r" style="left:0px;top:496px;width:24px;height:19px;background:#e1e1e1;"></div>
<div class="r" style="left:24px;top:495px;width:2px;height:21px;background:#217346;"></div>
<div class="r" style="left:0px;top:515px;width:25px;height:1px;background:#d0d0d0;"></div>
<div class="t" style="left:-287.50px;width:600px;top:500.64px;font-size:12px;line-height:12px;color:#217346;font-weight:normal;font-style:normal;text-align:center;">16</div>
<div class="r" style="left:0px;top:535px;width:25px;height:1px;background:#d0d0d0;"></div>
<div class="t" style="left:-287.50px;width:600px;top:520.64px;font-size:12px;line-height:12px;color:#444;font-weight:normal;font-style:normal;text-align:center;">17</div>
<div class="r" style="left:0px;top:555px;width:25px;height:1px;background:#d0d0d0;"></div>
<div class="t" style="left:-287.50px;width:600px;top:540.64px;font-size:12px;line-height:12px;color:#444;font-weight:normal;font-style:normal;text-align:center;">18</div>
<div class="r" style="left:0px;top:556px;width:24px;height:19px;background:#e1e1e1;"></div>
<div class="r" style="left:24px;top:555px;width:2px;height:21px;background:#217346;"></div>
<div class="r" style="left:0px;top:575px;width:25px;height:1px;background:#d0d0d0;"></div>
<div class="t" style="left:-287.50px;width:600px;top:560.64px;font-size:12px;line-height:12px;color:#217346;font-weight:normal;font-style:normal;text-align:center;">19</div>
<div class="r" style="left:0px;top:595px;width:25px;height:1px;background:#d0d0d0;"></div>
<div class="t" style="left:-287.50px;width:600px;top:580.64px;font-size:12px;line-height:12px;color:#444;font-weight:normal;font-style:normal;text-align:center;">20</div>
<div class="r" style="left:26px;top:193px;width:1314px;height:22px;background:#66c1ea;"></div>
<div class="r" style="left:26px;top:215px;width:1314px;height:39px;background:#afdcfb;"></div>
<div class="r" style="left:26px;top:254px;width:1314px;height:20px;background:#b8b9bb;"></div>
<div class="r" style="left:26px;top:274px;width:1314px;height:2px;background:#8eaadc;"></div>
<div class="t" style="left:28.59px;top:196.16px;font-size:16px;line-height:16px;color:#44546a;font-weight:bold;font-style:normal;text-align:left;"><span class="sc" style="transform:scaleX(1.0141);transform-origin:left center">Financial statements</span></div>
<div class="t" style="left:46.41px;top:257.10px;font-size:15px;line-height:15px;color:#44546a;font-weight:bold;font-style:normal;text-align:left;"><span class="sc" style="transform:scaleX(0.9892);transform-origin:left center">Profit &amp; Loss</span></div>
<div class="t" style="left:85.50px;top:218.80px;font-size:13px;line-height:13px;color:#0e1a33;font-weight:normal;font-style:normal;text-align:left;"><span class="sc" style="transform:scaleX(0.9958);transform-origin:left center">Start date</span></div>
<div class="t" style="left:84.50px;top:238.60px;font-size:13px;line-height:13px;color:#0e1a33;font-weight:normal;font-style:normal;text-align:left;"><span class="sc" style="transform:scaleX(0.9997);transform-origin:left center">End date</span></div>
<div class="t" style="left:-252.58px;width:600px;top:218.80px;font-size:13px;line-height:13px;color:#0e1a33;font-weight:normal;font-style:normal;text-align:right;"><span class="sc" style="transform:scaleX(0.9656);transform-origin:right center">01/01/2024</span></div>
<div class="t" style="left:-252.58px;width:600px;top:238.60px;font-size:13px;line-height:13px;color:#0e1a33;font-weight:normal;font-style:normal;text-align:right;"><span class="sc" style="transform:scaleX(0.9656);transform-origin:right center">31/01/2024</span></div>
<div class="t" style="left:-163.58px;width:600px;top:218.80px;font-size:13px;line-height:13px;color:#0e1a33;font-weight:normal;font-style:normal;text-align:right;"><span class="sc" style="transform:scaleX(0.9656);transform-origin:right center">01/02/2024</span></div>
<div class="t" style="left:-163.58px;width:600px;top:238.60px;font-size:13px;line-height:13px;color:#0e1a33;font-weight:normal;font-style:normal;text-align:right;"><span class="sc" style="transform:scaleX(0.9656);transform-origin:right center">29/02/2024</span></div>
<div class="t" style="left:-74.58px;width:600px;top:218.80px;font-size:13px;line-height:13px;color:#0e1a33;font-weight:normal;font-style:normal;text-align:right;"><span class="sc" style="transform:scaleX(0.9656);transform-origin:right center">01/03/2024</span></div>
<div class="t" style="left:-74.58px;width:600px;top:238.60px;font-size:13px;line-height:13px;color:#0e1a33;font-weight:normal;font-style:normal;text-align:right;"><span class="sc" style="transform:scaleX(0.9656);transform-origin:right center">31/03/2024</span></div>
<div class="t" style="left:14.42px;width:600px;top:218.80px;font-size:13px;line-height:13px;color:#0e1a33;font-weight:normal;font-style:normal;text-align:right;"><span class="sc" style="transform:scaleX(0.9656);transform-origin:right center">01/04/2024</span></div>
<div class="t" style="left:14.42px;width:600px;top:238.60px;font-size:13px;line-height:13px;color:#0e1a33;font-weight:normal;font-style:normal;text-align:right;"><span class="sc" style="transform:scaleX(0.9656);transform-origin:right center">30/04/2024</span></div>
<div class="t" style="left:103.42px;width:600px;top:218.80px;font-size:13px;line-height:13px;color:#0e1a33;font-weight:normal;font-style:normal;text-align:right;"><span class="sc" style="transform:scaleX(0.9656);transform-origin:right center">01/05/2024</span></div>
<div class="t" style="left:103.42px;width:600px;top:238.60px;font-size:13px;line-height:13px;color:#0e1a33;font-weight:normal;font-style:normal;text-align:right;"><span class="sc" style="transform:scaleX(0.9656);transform-origin:right center">31/05/2024</span></div>
<div class="t" style="left:192.42px;width:600px;top:218.80px;font-size:13px;line-height:13px;color:#0e1a33;font-weight:normal;font-style:normal;text-align:right;"><span class="sc" style="transform:scaleX(0.9656);transform-origin:right center">01/06/2024</span></div>
<div class="t" style="left:192.42px;width:600px;top:238.60px;font-size:13px;line-height:13px;color:#0e1a33;font-weight:normal;font-style:normal;text-align:right;"><span class="sc" style="transform:scaleX(0.9656);transform-origin:right center">30/06/2024</span></div>
<div class="t" style="left:281.42px;width:600px;top:218.80px;font-size:13px;line-height:13px;color:#0e1a33;font-weight:normal;font-style:normal;text-align:right;"><span class="sc" style="transform:scaleX(0.9656);transform-origin:right center">01/07/2024</span></div>
<div class="t" style="left:281.42px;width:600px;top:238.60px;font-size:13px;line-height:13px;color:#0e1a33;font-weight:normal;font-style:normal;text-align:right;"><span class="sc" style="transform:scaleX(0.9656);transform-origin:right center">31/07/2024</span></div>
<div class="t" style="left:370.42px;width:600px;top:218.80px;font-size:13px;line-height:13px;color:#0e1a33;font-weight:normal;font-style:normal;text-align:right;"><span class="sc" style="transform:scaleX(0.9656);transform-origin:right center">01/08/2024</span></div>
<div class="t" style="left:370.42px;width:600px;top:238.60px;font-size:13px;line-height:13px;color:#0e1a33;font-weight:normal;font-style:normal;text-align:right;"><span class="sc" style="transform:scaleX(0.9656);transform-origin:right center">31/08/2024</span></div>
<div class="t" style="left:459.42px;width:600px;top:218.80px;font-size:13px;line-height:13px;color:#0e1a33;font-weight:normal;font-style:normal;text-align:right;"><span class="sc" style="transform:scaleX(0.9656);transform-origin:right center">01/09/2024</span></div>
<div class="t" style="left:459.42px;width:600px;top:238.60px;font-size:13px;line-height:13px;color:#0e1a33;font-weight:normal;font-style:normal;text-align:right;"><span class="sc" style="transform:scaleX(0.9656);transform-origin:right center">30/09/2024</span></div>
<div class="t" style="left:548.42px;width:600px;top:218.80px;font-size:13px;line-height:13px;color:#0e1a33;font-weight:normal;font-style:normal;text-align:right;"><span class="sc" style="transform:scaleX(0.9656);transform-origin:right center">01/10/2024</span></div>
<div class="t" style="left:548.42px;width:600px;top:238.60px;font-size:13px;line-height:13px;color:#0e1a33;font-weight:normal;font-style:normal;text-align:right;"><span class="sc" style="transform:scaleX(0.9656);transform-origin:right center">31/10/2024</span></div>
<div class="t" style="left:637.42px;width:600px;top:218.80px;font-size:13px;line-height:13px;color:#0e1a33;font-weight:normal;font-style:normal;text-align:right;"><span class="sc" style="transform:scaleX(0.9656);transform-origin:right center">01/11/2024</span></div>
<div class="t" style="left:637.42px;width:600px;top:238.60px;font-size:13px;line-height:13px;color:#0e1a33;font-weight:normal;font-style:normal;text-align:right;"><span class="sc" style="transform:scaleX(0.9656);transform-origin:right center">30/11/2024</span></div>
<div class="t" style="left:726.42px;width:600px;top:218.80px;font-size:13px;line-height:13px;color:#0e1a33;font-weight:normal;font-style:normal;text-align:right;"><span class="sc" style="transform:scaleX(0.9656);transform-origin:right center">01/12/2024</span></div>
<div class="t" style="left:726.42px;width:600px;top:238.60px;font-size:13px;line-height:13px;color:#0e1a33;font-weight:normal;font-style:normal;text-align:right;"><span class="sc" style="transform:scaleX(0.9656);transform-origin:right center">31/12/2024</span></div>
<div class="t" style="left:66.30px;top:319.90px;font-size:13px;line-height:13px;color:#0b0b0b;font-weight:bold;font-style:normal;text-align:left;"><span class="sc" style="transform:scaleX(1.0248);transform-origin:left center">Revenue</span></div>
<div class="t" style="left:84.25px;top:339.90px;font-size:13px;line-height:13px;color:#0b0b0b;font-weight:normal;font-style:normal;text-align:left;"><span class="sc" style="transform:scaleX(0.9487);transform-origin:left center">Revenue</span></div>
<div class="t" style="left:85.20px;top:359.90px;font-size:13px;line-height:13px;color:#0b0b0b;font-weight:normal;font-style:normal;text-align:left;"><span class="sc" style="transform:scaleX(0.9533);transform-origin:left center">Other revenue</span></div>
<div class="t" style="left:84.21px;top:379.90px;font-size:13px;line-height:13px;color:#0b0b0b;font-weight:normal;font-style:normal;text-align:left;"><span class="sc" style="transform:scaleX(0.9871);transform-origin:left center">Misc revenue</span></div>
<div class="t" style="left:85.20px;top:419.90px;font-size:13px;line-height:13px;color:#0b0b0b;font-weight:bold;font-style:normal;text-align:left;"><span class="sc" style="transform:scaleX(1.0416);transform-origin:left center">Total revenue</span></div>
<div class="t" style="left:66.30px;top:459.90px;font-size:13px;line-height:13px;color:#0b0b0b;font-weight:bold;font-style:normal;text-align:left;"><span class="sc" style="transform:scaleX(0.9729);transform-origin:left center">Cost of sales</span></div>
<div class="t" style="left:85.20px;top:479.90px;font-size:13px;line-height:13px;color:#0b0b0b;font-weight:normal;font-style:normal;text-align:left;"><span class="sc" style="transform:scaleX(0.9981);transform-origin:left center">Cost of sales</span></div>
<div class="t" style="left:85.20px;top:499.90px;font-size:13px;line-height:13px;color:#0b0b0b;font-weight:normal;font-style:normal;text-align:left;"><span class="sc" style="transform:scaleX(0.9749);transform-origin:left center">Other COS</span></div>
<div class="t" style="left:66.30px;top:559.90px;font-size:13px;line-height:13px;color:#0b0b0b;font-weight:bold;font-style:normal;text-align:left;"><span class="sc" style="transform:scaleX(0.9538);transform-origin:left center">Gross profit</span></div>
<div class="t" style="left:-89.71px;width:600px;top:339.90px;font-size:13px;line-height:13px;color:#22a6e8;font-weight:normal;font-style:italic;text-align:center;"><span class="sc" style="transform:scaleX(0.9673);transform-origin:center center">&pound; mn</span></div>
<div class="t" style="left:-89.71px;width:600px;top:359.90px;font-size:13px;line-height:13px;color:#22a6e8;font-weight:normal;font-style:italic;text-align:center;"><span class="sc" style="transform:scaleX(0.9673);transform-origin:center center">&pound; mn</span></div>
<div class="t" style="left:-89.71px;width:600px;top:379.90px;font-size:13px;line-height:13px;color:#22a6e8;font-weight:normal;font-style:italic;text-align:center;"><span class="sc" style="transform:scaleX(0.9673);transform-origin:center center">&pound; mn</span></div>
<div class="t" style="left:-89.71px;width:600px;top:419.90px;font-size:13px;line-height:13px;color:#22a6e8;font-weight:normal;font-style:italic;text-align:center;"><span class="sc" style="transform:scaleX(0.9673);transform-origin:center center">&pound; mn</span></div>
<div class="t" style="left:-89.71px;width:600px;top:479.90px;font-size:13px;line-height:13px;color:#22a6e8;font-weight:normal;font-style:italic;text-align:center;"><span class="sc" style="transform:scaleX(0.9673);transform-origin:center center">&pound; mn</span></div>
<div class="t" style="left:-89.71px;width:600px;top:499.90px;font-size:13px;line-height:13px;color:#22a6e8;font-weight:normal;font-style:italic;text-align:center;"><span class="sc" style="transform:scaleX(0.9673);transform-origin:center center">&pound; mn</span></div>
<div class="t" style="left:-89.71px;width:600px;top:559.90px;font-size:13px;line-height:13px;color:#22a6e8;font-weight:normal;font-style:italic;text-align:center;"><span class="sc" style="transform:scaleX(0.9673);transform-origin:center center">&pound; mn</span></div>
<div class="r" style="left:262px;top:336px;width:1067px;height:59px;background:#e2ebd7;"></div>
<div class="r" style="left:261px;top:335px;width:1069px;height:1px;background:repeating-linear-gradient(90deg,#37a6e0 0 1px,transparent 1px 2px);"></div>
<div class="r" style="left:261px;top:355px;width:1069px;height:1px;background:repeating-linear-gradient(90deg,#37a6e0 0 1px,transparent 1px 2px);"></div>
<div class="r" style="left:261px;top:375px;width:1069px;height:1px;background:repeating-linear-gradient(90deg,#37a6e0 0 1px,transparent 1px 2px);"></div>
<div class="r" style="left:261px;top:395px;width:1069px;height:1px;background:repeating-linear-gradient(90deg,#37a6e0 0 1px,transparent 1px 2px);"></div>
<div class="r" style="left:261px;top:335px;width:1px;height:61px;background:repeating-linear-gradient(180deg,#37a6e0 0 1px,transparent 1px 2px);"></div>
<div class="r" style="left:350px;top:335px;width:1px;height:61px;background:repeating-linear-gradient(180deg,#37a6e0 0 1px,transparent 1px 2px);"></div>
<div class="r" style="left:439px;top:335px;width:1px;height:61px;background:repeating-linear-gradient(180deg,#37a6e0 0 1px,transparent 1px 2px);"></div>
<div class="r" style="left:528px;top:335px;width:1px;height:61px;background:repeating-linear-gradient(180deg,#37a6e0 0 1px,transparent 1px 2px);"></div>
<div class="r" style="left:617px;top:335px;width:1px;height:61px;background:repeating-linear-gradient(180deg,#37a6e0 0 1px,transparent 1px 2px);"></div>
<div class="r" style="left:706px;top:335px;width:1px;height:61px;background:repeating-linear-gradient(180deg,#37a6e0 0 1px,transparent 1px 2px);"></div>
<div class="r" style="left:795px;top:335px;width:1px;height:61px;background:repeating-linear-gradient(180deg,#37a6e0 0 1px,transparent 1px 2px);"></div>
<div class="r" style="left:884px;top:335px;width:1px;height:61px;background:repeating-linear-gradient(180deg,#37a6e0 0 1px,transparent 1px 2px);"></div>
<div class="r" style="left:973px;top:335px;width:1px;height:61px;background:repeating-linear-gradient(180deg,#37a6e0 0 1px,transparent 1px 2px);"></div>
<div class="r" style="left:1062px;top:335px;width:1px;height:61px;background:repeating-linear-gradient(180deg,#37a6e0 0 1px,transparent 1px 2px);"></div>
<div class="r" style="left:1151px;top:335px;width:1px;height:61px;background:repeating-linear-gradient(180deg,#37a6e0 0 1px,transparent 1px 2px);"></div>
<div class="r" style="left:1240px;top:335px;width:1px;height:61px;background:repeating-linear-gradient(180deg,#37a6e0 0 1px,transparent 1px 2px);"></div>
<div class="r" style="left:1329px;top:335px;width:1px;height:61px;background:repeating-linear-gradient(180deg,#37a6e0 0 1px,transparent 1px 2px);"></div>
<div class="r" style="left:262px;top:416px;width:1067px;height:19px;background:#eceff4;"></div>
<div class="r" style="left:261px;top:415px;width:1069px;height:1px;background:#1f80b8;"></div>
<div class="r" style="left:261px;top:435px;width:1069px;height:1px;background:repeating-linear-gradient(90deg,#1f80b8 0 1px,transparent 1px 2px);"></div>
<div class="r" style="left:261px;top:416px;width:1px;height:20px;background:repeating-linear-gradient(180deg,#1f80b8 0 1px,transparent 1px 2px);"></div>
<div class="r" style="left:350px;top:416px;width:1px;height:20px;background:repeating-linear-gradient(180deg,#1f80b8 0 1px,transparent 1px 2px);"></div>
<div class="r" style="left:439px;top:416px;width:1px;height:20px;background:repeating-linear-gradient(180deg,#1f80b8 0 1px,transparent 1px 2px);"></div>
<div class="r" style="left:528px;top:416px;width:1px;height:20px;background:repeating-linear-gradient(180deg,#1f80b8 0 1px,transparent 1px 2px);"></div>
<div class="r" style="left:617px;top:416px;width:1px;height:20px;background:repeating-linear-gradient(180deg,#1f80b8 0 1px,transparent 1px 2px);"></div>
<div class="r" style="left:706px;top:416px;width:1px;height:20px;background:repeating-linear-gradient(180deg,#1f80b8 0 1px,transparent 1px 2px);"></div>
<div class="r" style="left:795px;top:416px;width:1px;height:20px;background:repeating-linear-gradient(180deg,#1f80b8 0 1px,transparent 1px 2px);"></div>
<div class="r" style="left:884px;top:416px;width:1px;height:20px;background:repeating-linear-gradient(180deg,#1f80b8 0 1px,transparent 1px 2px);"></div>
<div class="r" style="left:973px;top:416px;width:1px;height:20px;background:repeating-linear-gradient(180deg,#1f80b8 0 1px,transparent 1px 2px);"></div>
<div class="r" style="left:1062px;top:416px;width:1px;height:20px;background:repeating-linear-gradient(180deg,#1f80b8 0 1px,transparent 1px 2px);"></div>
<div class="r" style="left:1151px;top:416px;width:1px;height:20px;background:repeating-linear-gradient(180deg,#1f80b8 0 1px,transparent 1px 2px);"></div>
<div class="r" style="left:1240px;top:416px;width:1px;height:20px;background:repeating-linear-gradient(180deg,#1f80b8 0 1px,transparent 1px 2px);"></div>
<div class="r" style="left:1329px;top:416px;width:1px;height:20px;background:repeating-linear-gradient(180deg,#1f80b8 0 1px,transparent 1px 2px);"></div>
<div class="r" style="left:262px;top:476px;width:1067px;height:39px;background:#e2ebd7;"></div>
<div class="r" style="left:262px;top:516px;width:1067px;height:19px;background:#eceff4;"></div>
<div class="r" style="left:261px;top:475px;width:1069px;height:1px;background:repeating-linear-gradient(90deg,#37a6e0 0 1px,transparent 1px 2px);"></div>
<div class="r" style="left:261px;top:495px;width:1069px;height:1px;background:repeating-linear-gradient(90deg,#37a6e0 0 1px,transparent 1px 2px);"></div>
<div class="r" style="left:261px;top:475px;width:1px;height:40px;background:repeating-linear-gradient(180deg,#37a6e0 0 1px,transparent 1px 2px);"></div>
<div class="r" style="left:350px;top:475px;width:1px;height:40px;background:repeating-linear-gradient(180deg,#37a6e0 0 1px,transparent 1px 2px);"></div>
<div class="r" style="left:439px;top:475px;width:1px;height:40px;background:repeating-linear-gradient(180deg,#37a6e0 0 1px,transparent 1px 2px);"></div>
<div class="r" style="left:528px;top:475px;width:1px;height:40px;background:repeating-linear-gradient(180deg,#37a6e0 0 1px,transparent 1px 2px);"></div>
<div class="r" style="left:617px;top:475px;width:1px;height:40px;background:repeating-linear-gradient(180deg,#37a6e0 0 1px,transparent 1px 2px);"></div>
<div class="r" style="left:706px;top:475px;width:1px;height:40px;background:repeating-linear-gradient(180deg,#37a6e0 0 1px,transparent 1px 2px);"></div>
<div class="r" style="left:795px;top:475px;width:1px;height:40px;background:repeating-linear-gradient(180deg,#37a6e0 0 1px,transparent 1px 2px);"></div>
<div class="r" style="left:884px;top:475px;width:1px;height:40px;background:repeating-linear-gradient(180deg,#37a6e0 0 1px,transparent 1px 2px);"></div>
<div class="r" style="left:973px;top:475px;width:1px;height:40px;background:repeating-linear-gradient(180deg,#37a6e0 0 1px,transparent 1px 2px);"></div>
<div class="r" style="left:1062px;top:475px;width:1px;height:40px;background:repeating-linear-gradient(180deg,#37a6e0 0 1px,transparent 1px 2px);"></div>
<div class="r" style="left:1151px;top:475px;width:1px;height:40px;background:repeating-linear-gradient(180deg,#37a6e0 0 1px,transparent 1px 2px);"></div>
<div class="r" style="left:1240px;top:475px;width:1px;height:40px;background:repeating-linear-gradient(180deg,#37a6e0 0 1px,transparent 1px 2px);"></div>
<div class="r" style="left:1329px;top:475px;width:1px;height:40px;background:repeating-linear-gradient(180deg,#37a6e0 0 1px,transparent 1px 2px);"></div>
<div class="r" style="left:261px;top:515px;width:1069px;height:1px;background:#1f80b8;"></div>
<div class="r" style="left:261px;top:535px;width:1069px;height:1px;background:repeating-linear-gradient(90deg,#1f80b8 0 1px,transparent 1px 2px);"></div>
<div class="r" style="left:261px;top:516px;width:1px;height:20px;background:repeating-linear-gradient(180deg,#1f80b8 0 1px,transparent 1px 2px);"></div>
<div class="r" style="left:350px;top:516px;width:1px;height:20px;background:repeating-linear-gradient(180deg,#1f80b8 0 1px,transparent 1px 2px);"></div>
<div class="r" style="left:439px;top:516px;width:1px;height:20px;background:repeating-linear-gradient(180deg,#1f80b8 0 1px,transparent 1px 2px);"></div>
<div class="r" style="left:528px;top:516px;width:1px;height:20px;background:repeating-linear-gradient(180deg,#1f80b8 0 1px,transparent 1px 2px);"></div>
<div class="r" style="left:617px;top:516px;width:1px;height:20px;background:repeating-linear-gradient(180deg,#1f80b8 0 1px,transparent 1px 2px);"></div>
<div class="r" style="left:706px;top:516px;width:1px;height:20px;background:repeating-linear-gradient(180deg,#1f80b8 0 1px,transparent 1px 2px);"></div>
<div class="r" style="left:795px;top:516px;width:1px;height:20px;background:repeating-linear-gradient(180deg,#1f80b8 0 1px,transparent 1px 2px);"></div>
<div class="r" style="left:884px;top:516px;width:1px;height:20px;background:repeating-linear-gradient(180deg,#1f80b8 0 1px,transparent 1px 2px);"></div>
<div class="r" style="left:973px;top:516px;width:1px;height:20px;background:repeating-linear-gradient(180deg,#1f80b8 0 1px,transparent 1px 2px);"></div>
<div class="r" style="left:1062px;top:516px;width:1px;height:20px;background:repeating-linear-gradient(180deg,#1f80b8 0 1px,transparent 1px 2px);"></div>
<div class="r" style="left:1151px;top:516px;width:1px;height:20px;background:repeating-linear-gradient(180deg,#1f80b8 0 1px,transparent 1px 2px);"></div>
<div class="r" style="left:1240px;top:516px;width:1px;height:20px;background:repeating-linear-gradient(180deg,#1f80b8 0 1px,transparent 1px 2px);"></div>
<div class="r" style="left:1329px;top:516px;width:1px;height:20px;background:repeating-linear-gradient(180deg,#1f80b8 0 1px,transparent 1px 2px);"></div>
<div class="r" style="left:262px;top:556px;width:1067px;height:19px;background:#eceff4;"></div>
<div class="r" style="left:261px;top:555px;width:1069px;height:1px;background:#1f80b8;"></div>
<div class="r" style="left:261px;top:575px;width:1069px;height:1px;background:repeating-linear-gradient(90deg,#1f80b8 0 1px,transparent 1px 2px);"></div>
<div class="r" style="left:261px;top:556px;width:1px;height:20px;background:repeating-linear-gradient(180deg,#1f80b8 0 1px,transparent 1px 2px);"></div>
<div class="r" style="left:350px;top:556px;width:1px;height:20px;background:repeating-linear-gradient(180deg,#1f80b8 0 1px,transparent 1px 2px);"></div>
<div class="r" style="left:439px;top:556px;width:1px;height:20px;background:repeating-linear-gradient(180deg,#1f80b8 0 1px,transparent 1px 2px);"></div>
<div class="r" style="left:528px;top:556px;width:1px;height:20px;background:repeating-linear-gradient(180deg,#1f80b8 0 1px,transparent 1px 2px);"></div>
<div class="r" style="left:617px;top:556px;width:1px;height:20px;background:repeating-linear-gradient(180deg,#1f80b8 0 1px,transparent 1px 2px);"></div>
<div class="r" style="left:706px;top:556px;width:1px;height:20px;background:repeating-linear-gradient(180deg,#1f80b8 0 1px,transparent 1px 2px);"></div>
<div class="r" style="left:795px;top:556px;width:1px;height:20px;background:repeating-linear-gradient(180deg,#1f80b8 0 1px,transparent 1px 2px);"></div>
<div class="r" style="left:884px;top:556px;width:1px;height:20px;background:repeating-linear-gradient(180deg,#1f80b8 0 1px,transparent 1px 2px);"></div>
<div class="r" style="left:973px;top:556px;width:1px;height:20px;background:repeating-linear-gradient(180deg,#1f80b8 0 1px,transparent 1px 2px);"></div>
<div class="r" style="left:1062px;top:556px;width:1px;height:20px;background:repeating-linear-gradient(180deg,#1f80b8 0 1px,transparent 1px 2px);"></div>
<div class="r" style="left:1151px;top:556px;width:1px;height:20px;background:repeating-linear-gradient(180deg,#1f80b8 0 1px,transparent 1px 2px);"></div>
<div class="r" style="left:1240px;top:556px;width:1px;height:20px;background:repeating-linear-gradient(180deg,#1f80b8 0 1px,transparent 1px 2px);"></div>
<div class="r" style="left:1329px;top:556px;width:1px;height:20px;background:repeating-linear-gradient(180deg,#1f80b8 0 1px,transparent 1px 2px);"></div>
<div class="r" style="left:618px;top:336px;width:88px;height:19px;background:#fff;"></div>
<div class="r" style="left:619px;top:337px;width:86px;height:17px;background:#adb5a4;"></div>
<div class="r" style="left:885px;top:356px;width:88px;height:19px;background:#fff;"></div>
<div class="r" style="left:886px;top:357px;width:86px;height:17px;background:#adb5a4;"></div>
<svg width="1340" height="584" viewBox="0 0 1340 584" style="pointer-events:none"><path d="M886,357 L891,357 L886,362 Z" fill="#217346"/></svg>
<div class="r" style="left:796px;top:376px;width:88px;height:19px;background:#fff;"></div>
<div class="r" style="left:797px;top:377px;width:86px;height:17px;background:#adb5a4;"></div>
<svg width="1340" height="584" viewBox="0 0 1340 584" style="pointer-events:none"><path d="M797,377 L802,377 L797,382 Z" fill="#217346"/></svg>
<div class="r" style="left:1152px;top:416px;width:88px;height:19px;background:#fff;"></div>
<div class="r" style="left:1153px;top:417px;width:86px;height:17px;background:#b5b7ba;"></div>
<svg width="1340" height="584" viewBox="0 0 1340 584" style="pointer-events:none"><path d="M1153,417 L1158,417 L1153,422 Z" fill="#217346"/></svg>
<div class="r" style="left:707px;top:496px;width:88px;height:19px;background:#fff;"></div>
<div class="r" style="left:708px;top:497px;width:86px;height:17px;background:#adb5a4;"></div>
<svg width="1340" height="584" viewBox="0 0 1340 584" style="pointer-events:none"><path d="M708,497 L713,497 L708,502 Z" fill="#217346"/></svg>
<div class="r" style="left:974px;top:496px;width:88px;height:19px;background:#fff;"></div>
<div class="r" style="left:975px;top:497px;width:86px;height:17px;background:#adb5a4;"></div>
<svg width="1340" height="584" viewBox="0 0 1340 584" style="pointer-events:none"><path d="M975,497 L980,497 L975,502 Z" fill="#217346"/></svg>
<div class="r" style="left:707px;top:556px;width:88px;height:19px;background:#fff;"></div>
<div class="r" style="left:708px;top:557px;width:86px;height:17px;background:#b5b7ba;"></div>
<svg width="1340" height="584" viewBox="0 0 1340 584" style="pointer-events:none"><path d="M708,557 L713,557 L708,562 Z" fill="#217346"/></svg>
<div class="r" style="left:529px;top:336px;width:88px;height:19px;background:#fff;"></div>
<div class="r" style="left:530px;top:337px;width:86px;height:17px;background:#e2ebd7;border:1.5px solid #1e6e40;"></div>
<div class="t" style="left:-256.50px;width:600px;top:340.10px;font-size:13px;line-height:13px;color:#0b0b0b;font-weight:normal;font-style:normal;text-align:right;">1,065</div>
<div class="t" style="left:-167.50px;width:600px;top:340.10px;font-size:13px;line-height:13px;color:#0b0b0b;font-weight:normal;font-style:normal;text-align:right;">1,075</div>
<div class="t" style="left:-78.50px;width:600px;top:340.10px;font-size:13px;line-height:13px;color:#0b0b0b;font-weight:normal;font-style:normal;text-align:right;">1,086</div>
<div class="t" style="left:10.50px;width:600px;top:340.10px;font-size:13px;line-height:13px;color:#0b0b0b;font-weight:normal;font-style:normal;text-align:right;">958</div>
<div class="t" style="left:99.50px;width:600px;top:340.10px;font-size:13px;line-height:13px;color:#0b0b0b;font-weight:normal;font-style:normal;text-align:right;">854</div>
<div class="t" style="left:188.50px;width:600px;top:340.10px;font-size:13px;line-height:13px;color:#0b0b0b;font-weight:normal;font-style:normal;text-align:right;">1,119</div>
<div class="t" style="left:277.50px;width:600px;top:340.10px;font-size:13px;line-height:13px;color:#0b0b0b;font-weight:normal;font-style:normal;text-align:right;">1,130</div>
<div class="t" style="left:366.50px;width:600px;top:340.10px;font-size:13px;line-height:13px;color:#0b0b0b;font-weight:normal;font-style:normal;text-align:right;">1,142</div>
<div class="t" style="left:455.50px;width:600px;top:340.10px;font-size:13px;line-height:13px;color:#0b0b0b;font-weight:normal;font-style:normal;text-align:right;">1,153</div>
<div class="t" style="left:544.50px;width:600px;top:340.10px;font-size:13px;line-height:13px;color:#0b0b0b;font-weight:normal;font-style:normal;text-align:right;">1,165</div>
<div class="t" style="left:633.50px;width:600px;top:340.10px;font-size:13px;line-height:13px;color:#0b0b0b;font-weight:normal;font-style:normal;text-align:right;">1,176</div>
<div class="t" style="left:722.50px;width:600px;top:340.10px;font-size:13px;line-height:13px;color:#0b0b0b;font-weight:normal;font-style:normal;text-align:right;">1,188</div>
<div class="t" style="left:-256.50px;width:600px;top:360.10px;font-size:13px;line-height:13px;color:#0b0b0b;font-weight:normal;font-style:normal;text-align:right;">21</div>
<div class="t" style="left:-167.50px;width:600px;top:360.10px;font-size:13px;line-height:13px;color:#0b0b0b;font-weight:normal;font-style:normal;text-align:right;">22</div>
<div class="t" style="left:-78.50px;width:600px;top:360.10px;font-size:13px;line-height:13px;color:#0b0b0b;font-weight:normal;font-style:normal;text-align:right;">22</div>
<div class="t" style="left:10.50px;width:600px;top:360.10px;font-size:13px;line-height:13px;color:#0b0b0b;font-weight:normal;font-style:normal;text-align:right;">22</div>
<div class="t" style="left:99.50px;width:600px;top:360.10px;font-size:13px;line-height:13px;color:#0b0b0b;font-weight:normal;font-style:normal;text-align:right;">22</div>
<div class="t" style="left:188.50px;width:600px;top:360.10px;font-size:13px;line-height:13px;color:#0b0b0b;font-weight:normal;font-style:normal;text-align:right;">22</div>
<div class="t" style="left:277.50px;width:600px;top:360.10px;font-size:13px;line-height:13px;color:#0b0b0b;font-weight:normal;font-style:normal;text-align:right;">23</div>
<div class="t" style="left:366.50px;width:600px;top:360.10px;font-size:13px;line-height:13px;color:#0b0b0b;font-weight:normal;font-style:normal;text-align:right;">5</div>
<div class="t" style="left:455.50px;width:600px;top:360.10px;font-size:13px;line-height:13px;color:#0b0b0b;font-weight:normal;font-style:normal;text-align:right;">23</div>
<div class="t" style="left:544.50px;width:600px;top:360.10px;font-size:13px;line-height:13px;color:#0b0b0b;font-weight:normal;font-style:normal;text-align:right;">23</div>
<div class="t" style="left:633.50px;width:600px;top:360.10px;font-size:13px;line-height:13px;color:#0b0b0b;font-weight:normal;font-style:normal;text-align:right;">24</div>
<div class="t" style="left:722.50px;width:600px;top:360.10px;font-size:13px;line-height:13px;color:#0b0b0b;font-weight:normal;font-style:normal;text-align:right;">24</div>
<div class="t" style="left:-256.50px;width:600px;top:380.10px;font-size:13px;line-height:13px;color:#0b0b0b;font-weight:normal;font-style:normal;text-align:right;">226</div>
<div class="t" style="left:-167.50px;width:600px;top:380.10px;font-size:13px;line-height:13px;color:#0b0b0b;font-weight:normal;font-style:normal;text-align:right;">238</div>
<div class="t" style="left:-78.50px;width:600px;top:380.10px;font-size:13px;line-height:13px;color:#0b0b0b;font-weight:normal;font-style:normal;text-align:right;">296</div>
<div class="t" style="left:10.50px;width:600px;top:380.10px;font-size:13px;line-height:13px;color:#0b0b0b;font-weight:normal;font-style:normal;text-align:right;">199</div>
<div class="t" style="left:99.50px;width:600px;top:380.10px;font-size:13px;line-height:13px;color:#0b0b0b;font-weight:normal;font-style:normal;text-align:right;">272</div>
<div class="t" style="left:188.50px;width:600px;top:380.10px;font-size:13px;line-height:13px;color:#0b0b0b;font-weight:normal;font-style:normal;text-align:right;">292</div>
<div class="t" style="left:277.50px;width:600px;top:380.10px;font-size:13px;line-height:13px;color:#0b0b0b;font-weight:normal;font-style:normal;text-align:right;">47</div>
<div class="t" style="left:366.50px;width:600px;top:380.10px;font-size:13px;line-height:13px;color:#0b0b0b;font-weight:normal;font-style:normal;text-align:right;">256</div>
<div class="t" style="left:455.50px;width:600px;top:380.10px;font-size:13px;line-height:13px;color:#0b0b0b;font-weight:normal;font-style:normal;text-align:right;">250</div>
<div class="t" style="left:544.50px;width:600px;top:380.10px;font-size:13px;line-height:13px;color:#0b0b0b;font-weight:normal;font-style:normal;text-align:right;">240</div>
<div class="t" style="left:633.50px;width:600px;top:380.10px;font-size:13px;line-height:13px;color:#0b0b0b;font-weight:normal;font-style:normal;text-align:right;">315</div>
<div class="t" style="left:722.50px;width:600px;top:380.10px;font-size:13px;line-height:13px;color:#0b0b0b;font-weight:normal;font-style:normal;text-align:right;">280</div>
<div class="t" style="left:-256.50px;width:600px;top:420.10px;font-size:13px;line-height:13px;color:#0b0b0b;font-weight:normal;font-style:normal;text-align:right;">1,312</div>
<div class="t" style="left:-167.50px;width:600px;top:420.10px;font-size:13px;line-height:13px;color:#0b0b0b;font-weight:normal;font-style:normal;text-align:right;">1,335</div>
<div class="t" style="left:-78.50px;width:600px;top:420.10px;font-size:13px;line-height:13px;color:#0b0b0b;font-weight:normal;font-style:normal;text-align:right;">1,404</div>
<div class="t" style="left:10.50px;width:600px;top:420.10px;font-size:13px;line-height:13px;color:#0b0b0b;font-weight:normal;font-style:normal;text-align:right;">1,179</div>
<div class="t" style="left:99.50px;width:600px;top:420.10px;font-size:13px;line-height:13px;color:#0b0b0b;font-weight:normal;font-style:normal;text-align:right;">1,148</div>
<div class="t" style="left:188.50px;width:600px;top:420.10px;font-size:13px;line-height:13px;color:#0b0b0b;font-weight:normal;font-style:normal;text-align:right;">1,433</div>
<div class="t" style="left:277.50px;width:600px;top:420.10px;font-size:13px;line-height:13px;color:#0b0b0b;font-weight:normal;font-style:normal;text-align:right;">1,200</div>
<div class="t" style="left:366.50px;width:600px;top:420.10px;font-size:13px;line-height:13px;color:#0b0b0b;font-weight:normal;font-style:normal;text-align:right;">1,402</div>
<div class="t" style="left:455.50px;width:600px;top:420.10px;font-size:13px;line-height:13px;color:#0b0b0b;font-weight:normal;font-style:normal;text-align:right;">1,426</div>
<div class="t" style="left:544.50px;width:600px;top:420.10px;font-size:13px;line-height:13px;color:#0b0b0b;font-weight:normal;font-style:normal;text-align:right;">1,428</div>
<div class="t" style="left:633.50px;width:600px;top:420.10px;font-size:13px;line-height:13px;color:#0b0b0b;font-weight:normal;font-style:normal;text-align:right;">1,176</div>
<div class="t" style="left:722.50px;width:600px;top:420.10px;font-size:13px;line-height:13px;color:#0b0b0b;font-weight:normal;font-style:normal;text-align:right;">1,492</div>
<div class="t" style="left:-251.90px;width:600px;top:480.10px;font-size:13px;line-height:13px;color:#0b0b0b;font-weight:normal;font-style:normal;text-align:right;">(443)</div>
<div class="t" style="left:-162.90px;width:600px;top:480.10px;font-size:13px;line-height:13px;color:#0b0b0b;font-weight:normal;font-style:normal;text-align:right;">(447)</div>
<div class="t" style="left:-73.90px;width:600px;top:480.10px;font-size:13px;line-height:13px;color:#0b0b0b;font-weight:normal;font-style:normal;text-align:right;">(452)</div>
<div class="t" style="left:15.10px;width:600px;top:480.10px;font-size:13px;line-height:13px;color:#0b0b0b;font-weight:normal;font-style:normal;text-align:right;">(205)</div>
<div class="t" style="left:104.10px;width:600px;top:480.10px;font-size:13px;line-height:13px;color:#0b0b0b;font-weight:normal;font-style:normal;text-align:right;">(461)</div>
<div class="t" style="left:193.10px;width:600px;top:480.10px;font-size:13px;line-height:13px;color:#0b0b0b;font-weight:normal;font-style:normal;text-align:right;">(466)</div>
<div class="t" style="left:282.10px;width:600px;top:480.10px;font-size:13px;line-height:13px;color:#0b0b0b;font-weight:normal;font-style:normal;text-align:right;">(470)</div>
<div class="t" style="left:371.10px;width:600px;top:480.10px;font-size:13px;line-height:13px;color:#0b0b0b;font-weight:normal;font-style:normal;text-align:right;">(475)</div>
<div class="t" style="left:460.10px;width:600px;top:480.10px;font-size:13px;line-height:13px;color:#0b0b0b;font-weight:normal;font-style:normal;text-align:right;">(480)</div>
<div class="t" style="left:549.10px;width:600px;top:480.10px;font-size:13px;line-height:13px;color:#0b0b0b;font-weight:normal;font-style:normal;text-align:right;">(484)</div>
<div class="t" style="left:638.10px;width:600px;top:480.10px;font-size:13px;line-height:13px;color:#0b0b0b;font-weight:normal;font-style:normal;text-align:right;">(489)</div>
<div class="t" style="left:727.10px;width:600px;top:480.10px;font-size:13px;line-height:13px;color:#0b0b0b;font-weight:normal;font-style:normal;text-align:right;">(494)</div>
<div class="t" style="left:-251.90px;width:600px;top:500.10px;font-size:13px;line-height:13px;color:#0b0b0b;font-weight:normal;font-style:normal;text-align:right;">(132)</div>
<div class="t" style="left:-162.90px;width:600px;top:500.10px;font-size:13px;line-height:13px;color:#0b0b0b;font-weight:normal;font-style:normal;text-align:right;">(128)</div>
<div class="t" style="left:-73.90px;width:600px;top:500.10px;font-size:13px;line-height:13px;color:#0b0b0b;font-weight:normal;font-style:normal;text-align:right;">(118)</div>
<div class="t" style="left:15.10px;width:600px;top:500.10px;font-size:13px;line-height:13px;color:#0b0b0b;font-weight:normal;font-style:normal;text-align:right;">(104)</div>
<div class="t" style="left:104.10px;width:600px;top:500.10px;font-size:13px;line-height:13px;color:#0b0b0b;font-weight:normal;font-style:normal;text-align:right;">(115)</div>
<div class="t" style="left:193.10px;width:600px;top:500.10px;font-size:13px;line-height:13px;color:#0b0b0b;font-weight:normal;font-style:normal;text-align:right;">(220)</div>
<div class="t" style="left:282.10px;width:600px;top:500.10px;font-size:13px;line-height:13px;color:#0b0b0b;font-weight:normal;font-style:normal;text-align:right;">(130)</div>
<div class="t" style="left:371.10px;width:600px;top:500.10px;font-size:13px;line-height:13px;color:#0b0b0b;font-weight:normal;font-style:normal;text-align:right;">(120)</div>
<div class="t" style="left:460.10px;width:600px;top:500.10px;font-size:13px;line-height:13px;color:#0b0b0b;font-weight:normal;font-style:normal;text-align:right;">(95)</div>
<div class="t" style="left:549.10px;width:600px;top:500.10px;font-size:13px;line-height:13px;color:#0b0b0b;font-weight:normal;font-style:normal;text-align:right;">(102)</div>
<div class="t" style="left:638.10px;width:600px;top:500.10px;font-size:13px;line-height:13px;color:#0b0b0b;font-weight:normal;font-style:normal;text-align:right;">(123)</div>
<div class="t" style="left:727.10px;width:600px;top:500.10px;font-size:13px;line-height:13px;color:#0b0b0b;font-weight:normal;font-style:normal;text-align:right;">(118)</div>
<div class="t" style="left:-251.90px;width:600px;top:520.10px;font-size:13px;line-height:13px;color:#0b0b0b;font-weight:normal;font-style:normal;text-align:right;">(575)</div>
<div class="t" style="left:-162.90px;width:600px;top:520.10px;font-size:13px;line-height:13px;color:#0b0b0b;font-weight:normal;font-style:normal;text-align:right;">(575)</div>
<div class="t" style="left:-73.90px;width:600px;top:520.10px;font-size:13px;line-height:13px;color:#0b0b0b;font-weight:normal;font-style:normal;text-align:right;">(569)</div>
<div class="t" style="left:15.10px;width:600px;top:520.10px;font-size:13px;line-height:13px;color:#0b0b0b;font-weight:normal;font-style:normal;text-align:right;">(309)</div>
<div class="t" style="left:104.10px;width:600px;top:520.10px;font-size:13px;line-height:13px;color:#0b0b0b;font-weight:normal;font-style:normal;text-align:right;">(575)</div>
<div class="t" style="left:193.10px;width:600px;top:520.10px;font-size:13px;line-height:13px;color:#0b0b0b;font-weight:normal;font-style:normal;text-align:right;">(686)</div>
<div class="t" style="left:282.10px;width:600px;top:520.10px;font-size:13px;line-height:13px;color:#0b0b0b;font-weight:normal;font-style:normal;text-align:right;">(600)</div>
<div class="t" style="left:371.10px;width:600px;top:520.10px;font-size:13px;line-height:13px;color:#0b0b0b;font-weight:normal;font-style:normal;text-align:right;">(594)</div>
<div class="t" style="left:460.10px;width:600px;top:520.10px;font-size:13px;line-height:13px;color:#0b0b0b;font-weight:normal;font-style:normal;text-align:right;">(575)</div>
<div class="t" style="left:549.10px;width:600px;top:520.10px;font-size:13px;line-height:13px;color:#0b0b0b;font-weight:normal;font-style:normal;text-align:right;">(586)</div>
<div class="t" style="left:638.10px;width:600px;top:520.10px;font-size:13px;line-height:13px;color:#0b0b0b;font-weight:normal;font-style:normal;text-align:right;">(612)</div>
<div class="t" style="left:727.10px;width:600px;top:520.10px;font-size:13px;line-height:13px;color:#0b0b0b;font-weight:normal;font-style:normal;text-align:right;">(612)</div>
<div class="t" style="left:-256.50px;width:600px;top:560.10px;font-size:13px;line-height:13px;color:#0b0b0b;font-weight:normal;font-style:normal;text-align:right;">737</div>
<div class="t" style="left:-167.50px;width:600px;top:560.10px;font-size:13px;line-height:13px;color:#0b0b0b;font-weight:normal;font-style:normal;text-align:right;">759</div>
<div class="t" style="left:-78.50px;width:600px;top:560.10px;font-size:13px;line-height:13px;color:#0b0b0b;font-weight:normal;font-style:normal;text-align:right;">834</div>
<div class="t" style="left:10.50px;width:600px;top:560.10px;font-size:13px;line-height:13px;color:#0b0b0b;font-weight:normal;font-style:normal;text-align:right;">870</div>
<div class="t" style="left:99.50px;width:600px;top:560.10px;font-size:13px;line-height:13px;color:#0b0b0b;font-weight:normal;font-style:normal;text-align:right;">572</div>
<div class="t" style="left:188.50px;width:600px;top:560.10px;font-size:13px;line-height:13px;color:#0b0b0b;font-weight:normal;font-style:normal;text-align:right;">1,433</div>
<div class="t" style="left:277.50px;width:600px;top:560.10px;font-size:13px;line-height:13px;color:#0b0b0b;font-weight:normal;font-style:normal;text-align:right;">600</div>
<div class="t" style="left:366.50px;width:600px;top:560.10px;font-size:13px;line-height:13px;color:#0b0b0b;font-weight:normal;font-style:normal;text-align:right;">808</div>
<div class="t" style="left:455.50px;width:600px;top:560.10px;font-size:13px;line-height:13px;color:#0b0b0b;font-weight:normal;font-style:normal;text-align:right;">851</div>
<div class="t" style="left:544.50px;width:600px;top:560.10px;font-size:13px;line-height:13px;color:#0b0b0b;font-weight:normal;font-style:normal;text-align:right;">841</div>
<div class="t" style="left:633.50px;width:600px;top:560.10px;font-size:13px;line-height:13px;color:#0b0b0b;font-weight:normal;font-style:normal;text-align:right;">564</div>
<div class="t" style="left:722.50px;width:600px;top:560.10px;font-size:13px;line-height:13px;color:#0b0b0b;font-weight:normal;font-style:normal;text-align:right;">880</div>
<svg width="1340" height="584" viewBox="0 0 1340 584" style="pointer-events:none"><rect x="440" y="296.2" width="88" height="18.6" fill="none" stroke="#1e6b3a" stroke-width="2" stroke-dasharray="6 3"/><path d="M520,297.5 L526.7,297.5 L526.7,303.5 Z" fill="#c06bd0"/></svg>
</body></html>
